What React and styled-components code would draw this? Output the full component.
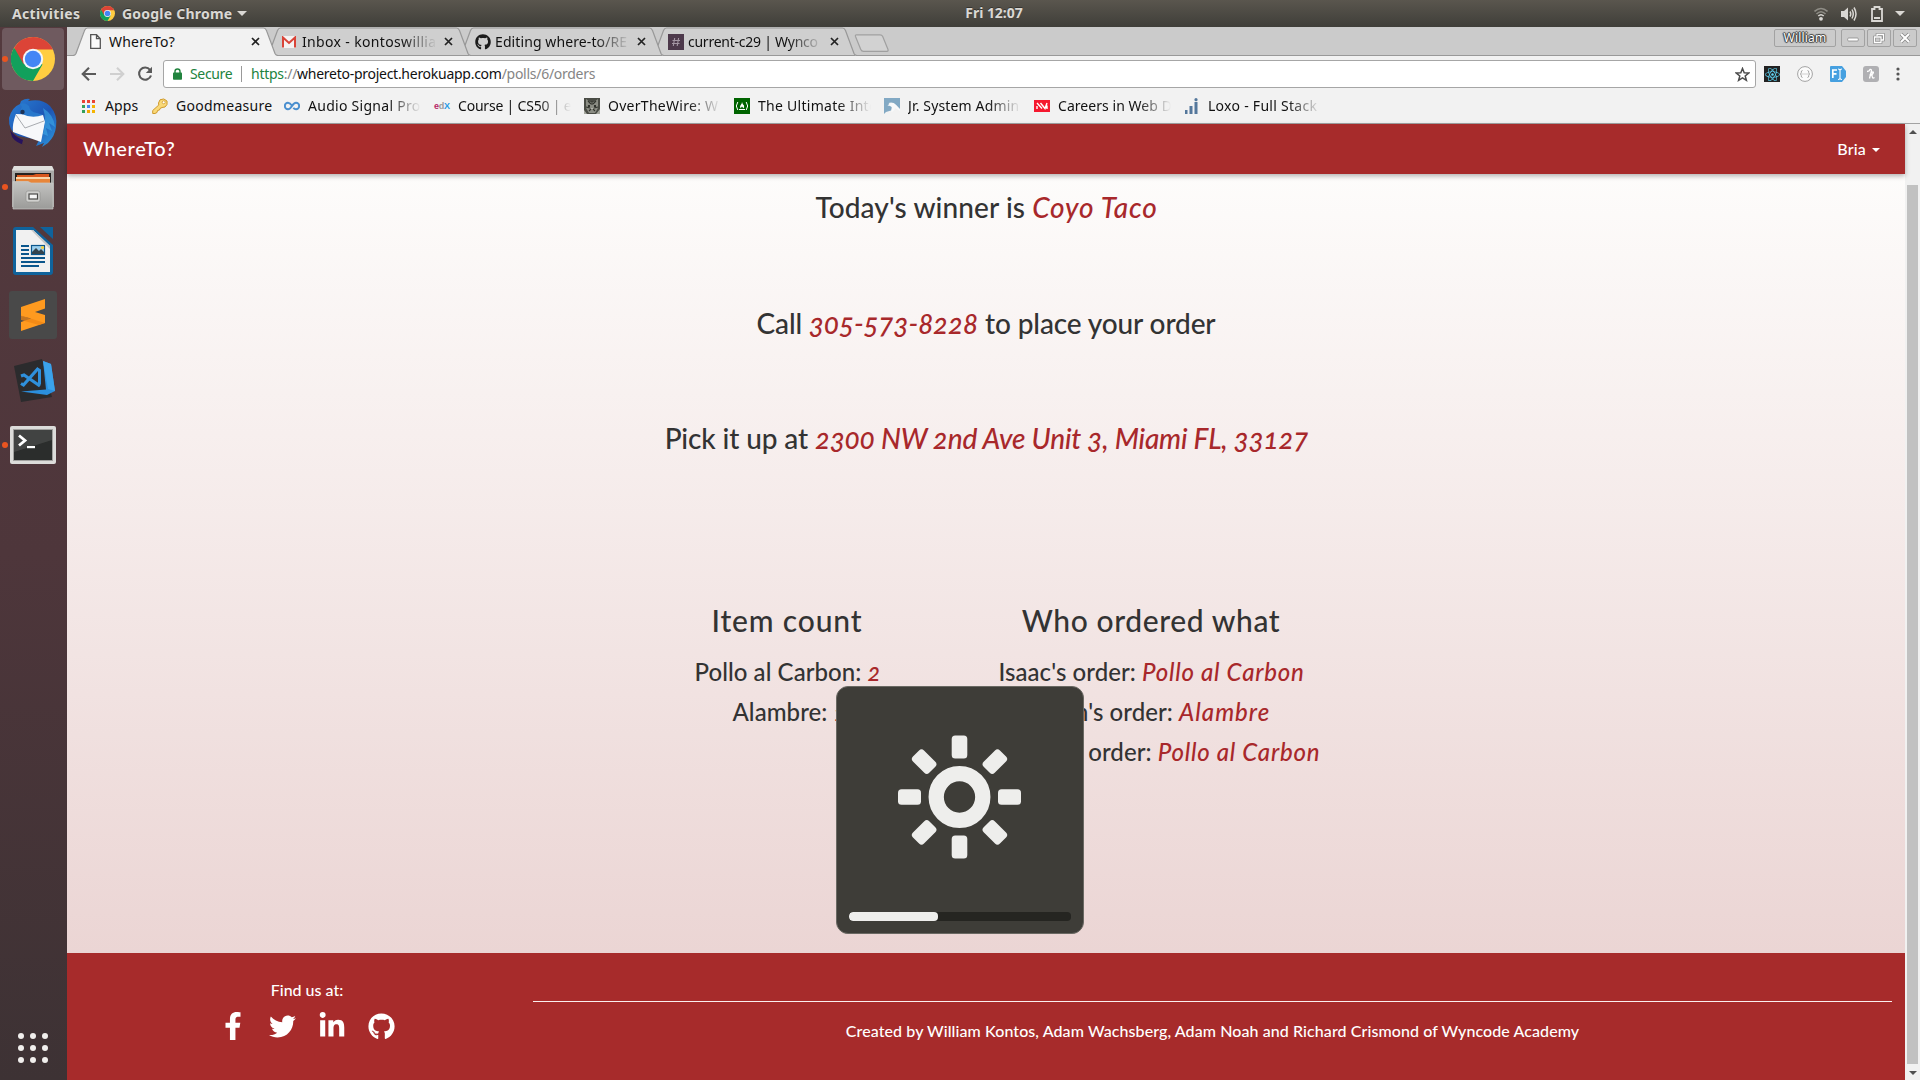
import React from "react";
import styled, { createGlobalStyle, css } from "styled-components";
import { FaFacebookF, FaTwitter, FaLinkedinIn, FaGithub, FaReact } from "react-icons/fa";

const GlobalStyle = createGlobalStyle`
  * { box-sizing: border-box; }
  html, body { margin: 0; padding: 0; overflow: hidden; }
  svg { display: block; flex: none; }
`;

const uiFont = css`font-family: "Noto Sans", "Open Sans", sans-serif;`;
const pageFont = css`
  font-family: Lato, "Open Sans", sans-serif;
  font-variant-numeric: oldstyle-nums;
`;

/* ---------- desktop ---------- */
const Desktop = styled.div`
  width: 1920px;
  height: 1080px;
  display: flex;
  flex-direction: column;
  overflow: hidden;
  position: relative;
  ${uiFont}
`;
const TopBar = styled.header`
  height: 27px;
  flex: none;
  display: grid;
  grid-template-columns: 1fr auto 1fr;
  align-items: center;
  padding: 0 10px 0 12px;
  background: linear-gradient(#5a564e, #3f3e39);
  color: #dad8d4;
  font-size: 14px;
  font-weight: bold;
  line-height: 26px;
  text-shadow: 0 -1px 0 rgba(0, 0, 0, 0.35);
`;
const TopLeft = styled.div`display: flex; align-items: center;`;
const Activities = styled.span`letter-spacing: 0.33px; width: 88px;`;
const AppName = styled.span`letter-spacing: 0.22px; margin: 0 5px 0 7px;`;
const Clock = styled.span`letter-spacing: -0.05px; margin: -1px 0 0 66px;`;
const Tray = styled.div`display: flex; align-items: center; justify-content: flex-end;`;
const TrayItem = styled.span`margin-left: ${(p) => p.$gap || 0}px;`;
const Body = styled.div`flex: 1; display: flex; min-height: 0;`;

/* ---------- dock ---------- */
const Dock = styled.nav`
  width: 67px;
  flex: none;
  display: flex;
  flex-direction: column;
  align-items: flex-start;
  gap: 2px;
  padding: 1px 0 17px 2px;
  background: linear-gradient(#543a3e, #4e363b 50%, #3d3234);
`;
const DockItem = styled.div`
  width: 62px;
  height: 62px;
  flex: none;
  display: grid;
  grid-template-columns: 6px 50px 6px;
  align-items: center;
  justify-items: center;
  border-radius: 4px;
  padding: ${(p) => p.$dy || 0}px 0 0 0;
  background: ${(p) => (p.$active ? "#6f5a5f" : "transparent")};
`;
const Dot = styled.span`
  width: 6px;
  height: 6px;
  border-radius: 50%;
  background: ${(p) => (p.$on ? "#e95420" : "transparent")};
`;
const AppsButton = styled.div`
  margin: auto 0 0 16px;
  display: grid;
  grid-template-columns: repeat(3, 6px);
  gap: 6px;
`;
const AppsDot = styled.span`width: 6px; height: 6px; border-radius: 50%; background: #f1efed;`;

/* ---------- browser ---------- */
const Browser = styled.main`flex: 1; display: flex; flex-direction: column; min-width: 0;`;
const TabStrip = styled.div`
  height: 29px;
  flex: none;
  display: flex;
  justify-content: space-between;
  padding: 0 3px 0 6px;
  background: linear-gradient(#cbcbcb 0 28px, #999 28px);
`;
const Tabs = styled.div`display: flex;`;
const Tab = styled.div`
  width: 205px;
  height: 29px;
  margin-right: -12px;
  display: grid;
  z-index: ${(p) => p.$z};
  & > * { grid-area: 1 / 1; }
`;
const TabInner = styled.div`
  display: flex;
  align-items: center;
  height: 29px;
  padding: 0 16px 0 15px;
`;
const TabIcon = styled.span`width: 18px; display: flex; justify-content: center;`;
const TabLabel = styled.span`
  width: 136px;
  margin: 0 6px 0 3px;
  overflow: hidden;
  white-space: nowrap;
  font-size: 14px;
  line-height: 28px;
  color: #111;
  letter-spacing: ${(p) => p.$ls}px;
  mask-image: ${(p) => (p.$fade ? "linear-gradient(to right, #000 100px, transparent 135px)" : "none")};
`;
const NewTab = styled.div`margin: 7px 0 0 9px;`;
const WindowControls = styled.div`display: flex; padding-top: 2px;`;
const UserTag = styled.div`
  width: 62px;
  height: 18px;
  margin-right: 5px;
  border: 1px solid #a2a2a2;
  border-radius: 2px;
  font-size: 12px;
  line-height: 16px;
  letter-spacing: 0.2px;
  text-align: center;
  color: #fff;
  text-shadow: 0 0 1px #333, 0 0 1px #333, 1px 0 1px #444, -1px 0 1px #444, 0 1px 1px #444, 0 -1px 1px #444;
`;
const WinButton = styled.div`
  width: 24px;
  height: 18px;
  margin-right: 2px;
  border: 1px solid #a2a2a2;
  border-radius: 2px;
  display: grid;
  place-items: center;
  &:last-child { margin-right: 0; }
`;
const Toolbar = styled.div`
  height: 36px;
  flex: none;
  display: flex;
  align-items: center;
  padding: 0 20px 0 13px;
  background: #f2f2f2;
`;
const NavIcons = styled.div`display: flex; gap: 10px; width: 83px;`;
const Omnibox = styled.div`
  width: 1593px;
  height: 28px;
  display: flex;
  align-items: center;
  padding: 0 5px 0 9px;
  border: 1px solid #a6a6a6;
  border-radius: 3px;
  background: #fff;
  font-size: 14px;
  line-height: 26px;
`;
const Secure = styled.span`color: #21833e; letter-spacing: -0.35px; margin-left: 8px; width: 51px;`;
const Divider = styled.span`width: 1px; height: 16px; background: #999; margin-right: 9px;`;
const Url = styled.span`flex: 1; letter-spacing: -0.27px; color: #111;`;
const Scheme = styled.span`color: #21833e;`;
const Muted = styled.span`color: #858585;`;
const Extensions = styled.div`display: flex; flex: 1; justify-content: space-between; padding-left: 8px; align-items: center;`;
const ReactBadge = styled.span`
  width: 16px; height: 16px; background: #222; color: #5fd3f3;
  display: grid; place-items: center; font-size: 15px;
`;
const Bookmarks = styled.div`
  height: 32px;
  flex: none;
  display: flex;
  align-items: flex-start;
  padding: 0 15px;
  background: #f2f2f2;
  border-bottom: 1px solid #a3a3a3;
`;
const Bookmark = styled.div`
  width: ${(p) => p.$w || 150}px;
  height: 28px;
  display: flex;
  align-items: center;
  gap: ${(p) => p.$gap || 8}px;
`;
const BookmarkLabel = styled.span`
  width: 116px;
  white-space: nowrap;
  font-size: 14px;
  line-height: 28px;
  letter-spacing: ${(p) => p.$ls ?? 0.28}px;
  color: #111;
  mask-image: ${(p) => (p.$fade ? "linear-gradient(to right, #000 80px, transparent 113px)" : "none")};
`;
const EdxLogo = styled.span`
  width: 16px;
  font: bold 9px/16px "Liberation Sans", sans-serif;
  letter-spacing: -0.3px;
  color: #b72667;
  white-space: nowrap;
`;
const EdxD = styled.span`color: #9a9a9a;`;
const EdxX = styled.span`color: #1e9be5;`;

/* ---------- web page ---------- */
const Viewport = styled.div`flex: 1; display: flex; min-height: 0;`;
const Page = styled.div`
  flex: 1;
  display: flex;
  flex-direction: column;
  ${pageFont}
  font-weight: 500;
  color: #333;
`;
const Navbar = styled.div`
  height: 50px;
  flex: none;
  display: flex;
  align-items: center;
  justify-content: space-between;
  padding: 0 25px 3px 16px;
  background: #a72b2b;
  color: #fff;
  z-index: 1;
  box-shadow: 0 2px 5px rgba(0, 0, 0, 0.3);
`;
const Brand = styled.span`font-size: 20px; letter-spacing: 0.7px;`;
const UserMenu = styled.span`
  display: flex; align-items: center; gap: 6px; font-size: 16px; letter-spacing: 0.2px; padding-top: 1px;
`;
const Caret = styled.i`margin-top: 3px; border: 4px solid transparent; border-top-color: #fff; border-bottom: 0;`;
const Content = styled.section`
  flex: 1;
  padding: 13px 0 0 0;
  background: linear-gradient(#fdfcfb, #ebd5d4);
`;
const Line = styled.p`
  margin: 0 0 75.5px;
  height: 40px;
  line-height: 40px;
  font-size: 28px;
  text-align: center;
  white-space: pre;
  letter-spacing: ${(p) => p.$ls || 0}px;
  padding-left: ${(p) => p.$shift || 0}px;
`;
const Em = styled.em`color: #a8282b; letter-spacing: ${(p) => p.$ls || 0}px;`;
const Columns = styled.div`
  display: flex;
  justify-content: center;
  padding: 65px 35px 0 0;
`;
const Column = styled.div`width: 364px; text-align: center; white-space: pre;`;
const ColumnTitle = styled.h2`
  margin: 0 0 11px;
  font-size: 30px;
  font-weight: 500;
  line-height: 42px;
  letter-spacing: ${(p) => p.$ls}px;
  padding-left: 1px;
`;
const Entry = styled.p`
  margin: 0 ${(p) => -(p.$shift || 0)}px 0 ${(p) => p.$shift || 0}px;
  height: 40px;
  line-height: 40px;
  font-size: 24px;
  letter-spacing: 0.06px;
`;
const Footer = styled.footer`
  height: 127px;
  flex: none;
  display: flex;
  background: #a72b2b;
  color: #fff;
  font-size: 16px;
`;
const Social = styled.div`
  width: 466px;
  padding: 25px 0 0 13px;
  display: flex;
  flex-direction: column;
  align-items: center;
`;
const SocialTitle = styled.span`line-height: 24px; margin-left: 1px;`;
const SocialIcons = styled.div`display: flex; align-items: center; height: 32px; margin-top: 8px; gap: 22px;`;
const Credit = styled.div`flex: 1; padding: 48px 13px 0 0; text-align: center;`;
const Rule = styled.hr`margin: 0 0 17px; border: 0; height: 1px; background: #fbeeee;`;
const CreditText = styled.p`margin: 0; line-height: 24px; letter-spacing: 0.085px;`;
const Scrollbar = styled.div`
  width: 15px;
  flex: none;
  display: flex;
  flex-direction: column;
  align-items: center;
  background: #f1f1f1;
  padding: 6px 0 5px;
`;
const Thumb = styled.div`flex: 1; width: 11px; margin: 51px 0 7px; background: #c1c1c1;`;
const Arrow = styled.i`
  border: 4px solid transparent;
  ${(p) => (p.$up ? "border-bottom-color: #505050; border-top: 0;" : "border-top-color: #505050; border-bottom: 0;")}
`;

/* ---------- brightness popup ---------- */
const Osd = styled.div`
  position: absolute;
  left: 836px;
  top: 686px;
  width: 248px;
  height: 248px;
  display: flex;
  flex-direction: column;
  justify-content: space-between;
  align-items: center;
  padding: 48px 12px 12px;
  border: 1px solid #6a6963;
  border-radius: 12px;
  background: #3e3d38;
  z-index: 5;
`;
const Level = styled.div`width: 222px; height: 9px; border-radius: 4px; background: #252521; overflow: hidden;`;
const LevelFill = styled.div`width: 40%; height: 9px; border-radius: 4px; background: #eeeeec;`;

/* ---------- drawings ---------- */
const ChromeLogo = ({ size }) => (
  <svg width={size} height={size} viewBox="0 0 44 44">
    <circle cx="22" cy="22" r="22" fill="#ffcd41" />
    <path d="M22 22 L2.9 11 A22 22 0 0 0 22 44 L31.5 27.5 Z" fill="#12a05c" />
    <path d="M22 0 A22 22 0 0 1 41.8 12.4 L22 12.4 L12.5 27 L3.2 10.8 A22 22 0 0 1 22 0 Z" fill="#dc4437" />
    <circle cx="22" cy="22" r="10.2" fill="#f4f6f8" />
    <circle cx="22" cy="22" r="8.2" fill="#4486f5" />
  </svg>
);
const Thunderbird = () => (
  <svg width="50" height="50" viewBox="0 0 50 50">
    <defs>
      <linearGradient id="tb" x1="0" y1="0" x2="1" y2="1">
        <stop offset="0" stopColor="#2a7fd4" /><stop offset=".55" stopColor="#1d55b4" /><stop offset="1" stopColor="#2e9be0" />
      </linearGradient>
    </defs>
    <path d="M13 3 Q18 0 22 1 L20 3 Q34 0 42 8 Q50 17 48 29 Q47 38 40 45 L34 49 L36 45 L28 48 L31 42 L10 38 Q0 32 1 20 Q4 9 12 6 Z" fill="url(#tb)" />
    <path d="M2 32 Q7 39 15 42 L14 46 L17 47 Q8 45 4 39 Z" fill="#27125d" />
    <path d="M8 16 L35 17 L37 24 L33 44 L5 34 Q4 26 8 16 Z" fill="#f7f8fa" />
    <path d="M8 17 L17 30 L36 23" fill="none" stroke="#a8abb0" strokeWidth="1" />
    <path d="M12 6 Q17 4 21 8 Q22 14 29 15 L35 17 Q24 21 14 16 Q11 12 14 9 Z" fill="#2878cc" />
    <circle cx="14.5" cy="14" r="2.2" fill="#1c3358" />
    <path d="M35 10 Q46 17 47 29 L41 25 L44 33 L38 30 L40 38 L35 36 Q39 22 35 10 Z" fill="#3da9e6" opacity=".6" />
  </svg>
);
const FilesIcon = () => (
  <svg width="44" height="46" viewBox="0 0 44 46">
    <defs>
      <linearGradient id="cab" x1="0" y1="0" x2="0" y2="1"><stop offset="0" stopColor="#c4c4c2" /><stop offset="1" stopColor="#9b9b99" /></linearGradient>
    </defs>
    <path d="M3 2 H41 L43 6 V43 H1 V6 Z" fill="#a9a9a7" />
    <path d="M3 2 H41 L43 6.5 H1 Z" fill="#e0e0de" />
    <rect x="4" y="9" width="36" height="10" fill="#262220" />
    <path d="M6 11 H22 L25 10 H38 V19 H6 Z" fill="#d8571d" />
    <rect x="5" y="13" width="34" height="2" fill="#f9d5a8" />
    <rect x="5" y="15" width="34" height="4" fill="#e8863a" />
    <path d="M2 17.500 H17 L20 19 H42 V45 H2 Z" fill="url(#cab)" stroke="#c9c9c7" strokeWidth=".7" />
    <rect x="15" y="27" width="14" height="11" rx="2" fill="#d0d0ce" stroke="#8d8d8b" strokeWidth=".6" />
    <rect x="18" y="30" width="8.500" height="5" fill="#f6f6f6" stroke="#4a4a48" strokeWidth="1.200" />
  </svg>
);
const WriterIcon = () => (
  <svg width="40" height="48" viewBox="0 0 40 48">
    <path d="M3 0 H20 L40 18 V45 Q40 48 37 48 H3 Q0 48 0 45 V3 Q0 0 3 0 Z" fill="#0f639c" />
    <path d="M27 0 H40 V12 Z" fill="#0f639c" />
    <path d="M3 3 H20 L37 19 V45 H3 Z" fill="#f1f1f1" />
    <path d="M20 3 L37 19 V22 L18 3 Z" fill="#c6c6c6" />
    <path d="M8 19 H16 M8 23 H16 M8 27 H16 M8 31 H32 M8 35 H32 M8 39 H26" stroke="#0a568c" strokeWidth="2" />
    <rect x="18.500" y="18.500" width="13" height="9" fill="#9bd0ee" stroke="#0a568c" strokeWidth="1.200" />
    <path d="M19 27 V25 L23 21 L26 24 L28 22 L31 25 V27 Z" fill="#33434d" />
    <circle cx="29.500" cy="20.500" r="1.600" fill="#f4cf3c" />
  </svg>
);
const SublimeIcon = () => (
  <svg width="48" height="48" viewBox="0 0 48 48">
    <rect width="48" height="48" rx="3" fill="#494949" />
    <path d="M12 16 L36 8 V17.500 L26 21 L36 24 V32 L12 40 V31 L22 27.500 L12 25 Z" fill="#ff9a1f" />
    <path d="M12 24.500 L36 32 L30 34 L12 29 Z" fill="#ee8414" opacity=".75" />
  </svg>
);
const VscodeIcon = () => (
  <svg width="46" height="44" viewBox="-4 0 46 44">
    <path d="M0 7 L28 0 L38 38 L7 43 Z" fill="#2b2b2d" />
    <path d="M29 2 L37 5 L41 32 L33 36 L7 32.500 L32 30.500 Z" fill="#2b8fdd" />
    <path d="M29 2 L37 5 L41 32 L34 30 Z" fill="#3ba2ea" />
    <path d="M7 17 L10 16 L26 27 M7 24.500 L9.500 26 L24.500 9" fill="none" stroke="#2f90dc" strokeWidth="3.200" />
    <path d="M24 9 L27 10.500 V25 L24 27.500 Z" fill="#2f90dc" />
  </svg>
);
const TerminalIcon = () => (
  <svg width="46" height="38" viewBox="0 0 46 38">
    <rect width="46" height="38" rx="2" fill="#dcdcda" />
    <rect x="3" y="3" width="40" height="32" fill="#a2a2a0" />
    <rect x="4" y="4" width="38" height="30" fill="#2b2d2c" />
    <path d="M4 4 H42 V14 L4 26 Z" fill="#4b4d4c" opacity=".7" />
    <path d="M9 9.500 L15 14.500 L9 19.500" fill="none" stroke="#fff" strokeWidth="2.800" />
    <rect x="17" y="20" width="8" height="2.200" fill="#fff" />
  </svg>
);
const WifiIcon = () => (
  <svg width="14" height="14" viewBox="0 0 14 14" fill="none" strokeWidth="1.600">
    <path d="M0.500 4.500 Q7 -1.500 13.500 4.500 M2.500 7 Q7 2.500 11.500 7" stroke="#8f8d86" />
    <path d="M4.300 9 Q7 6.500 9.700 9" stroke="#dad8d4" /><circle cx="7" cy="11.800" r="1.900" fill="#dad8d4" />
  </svg>
);
const VolumeIcon = () => (
  <svg width="16" height="16" viewBox="0 0 16 16">
    <path d="M0 5 H3 L7 1.500 V14.500 L3 11 H0 Z" fill="#dad8d4" />
    <path d="M9 5.500 Q10.500 8 9 10.500 M11 3.500 Q13.500 8 11 12.500 M13 1.500 Q17 8 13 14.500" fill="none" stroke="#dad8d4" strokeWidth="1.500" />
  </svg>
);
const BatteryIcon = () => (
  <svg width="12" height="16" viewBox="0 0 12 16">
    <path d="M1 3 H3.500 V1 H8.500 V3 H11 V15 H1 Z" fill="none" stroke="#dad8d4" strokeWidth="1.800" />
    <rect x="3" y="11" width="6" height="2" fill="#dad8d4" />
  </svg>
);
const Triangle = ({ w = 10, color = "#dad8d4" }) => (
  <svg width={w} height="5" viewBox="0 0 10 5"><path d="M0 0 H10 L5 5 Z" fill={color} /></svg>
);
const TabShape = ({ active }) => (
  <svg width="205" height="29" viewBox="0 0 205 29">
    <path d="M0 29 L0.500 28.500 Q2 28.500 3 26.500 L11 3.500 Q12.500 1 14 1 H191 Q193 1 194 3.500 L202 26.500 Q203 28.500 205 28.500 V29 Z" fill={active ? "#f2f2f2" : "#cfcfcf"} />
    <path d="M0 28.500 Q2 28.500 3 26.500 L11.500 3.500 Q12.500 1 14.500 1 H190.500 Q192.500 1 193.500 3.500 L202 26.500 Q203 28.500 205 28.500" fill="none" stroke="#989898" strokeWidth="1.200" />
    {!active && <path d="M2 28.500 H203" stroke="#999" strokeWidth="1" />}
  </svg>
);
const CloseX = () => (
  <svg width="9" height="9" viewBox="0 0 9 9"><path d="M1 1 L8 8 M8 1 L1 8" stroke="#222" strokeWidth="1.700" /></svg>
);
const DocIcon = () => (
  <svg width="14" height="15" viewBox="0 0 14 15"><path d="M.7 .7 H6.500 L10.300 4.700 V14.300 H.7 Z M6.500 .7 V4.700 H10.300" fill="#fbfbfb" stroke="#555" strokeWidth="1.300" /></svg>
);
const GmailIcon = () => (
  <svg width="18" height="12" viewBox="0 0 18 12"><rect x="1" width="14" height="12" rx="1" fill="#f5f2f2" /><path d="M2 11.500 V1.500 L8 7 L14 1.500 V11.500" fill="none" stroke="#d94438" strokeWidth="2" /></svg>
);
const SlackHash = () => (
  <svg width="16" height="16" viewBox="0 0 16 16"><rect width="16" height="16" fill="#4d394b" /><path d="M6.700 4 L5.300 12 M10.600 4 L9.200 12 M4.500 6.500 H12 M4 9.500 H11.500" stroke="#a496a3" strokeWidth="1.100" /></svg>
);
const BackIcon = ({ color, flip }) => (
  <svg width="18" height="16" viewBox="0 0 18 16"><path transform={flip ? "matrix(-1 0 0 1 18 0)" : undefined} d="M16 8 H3 M9 1.700 L2.700 8 L9 14.300" fill="none" stroke={color} strokeWidth="2.100" /></svg>
);
const ReloadIcon = () => (
  <svg width="17" height="16" viewBox="-1 0 17 16"><path d="M13 3.800 A6.100 6.100 0 1 0 14 9.500" fill="none" stroke="#5a5a5a" strokeWidth="2.100" /><path d="M15 .8 V7 H8.800 Z" fill="#5a5a5a" /></svg>
);
const LockIcon = () => (
  <svg width="9" height="12" viewBox="0 0 9 12"><rect y="4.500" width="9" height="7.300" rx=".8" fill="#21833e" /><path d="M2 5 V3.200 Q2 1 4.500 1 T7 3.200 V5" fill="none" stroke="#21833e" strokeWidth="1.400" /></svg>
);
const StarIcon = () => (
  <svg width="15" height="15" viewBox="0 0 15 15"><path d="M7.500 1.500 L9.200 5.700 L13.700 6 L10.200 8.900 L11.400 13.300 L7.500 10.900 L3.600 13.300 L4.800 8.900 L1.300 6 L5.800 5.700 Z" fill="none" stroke="#4b4b4b" strokeWidth="1.500" /></svg>
);
const BracesIcon = () => (
  <svg width="16" height="16" viewBox="0 0 16 16" fill="none" stroke="#a3a3a3"><circle cx="8" cy="8" r="7.400" fill="#fbfbfb" /><path d="M5.500 4.500 Q4 4.500 4.300 6.500 Q4.300 8 3.300 8 Q4.300 8 4.300 9.500 Q4 11.500 5.500 11.500 M10.500 4.500 Q12 4.500 11.700 6.500 Q11.700 8 12.700 8 Q11.700 8 11.700 9.500 Q12 11.500 10.500 11.500" /><path d="M5.500 8 H10.500" strokeDasharray="1 1" /></svg>
);
const FontIcon = () => (
  <svg width="16" height="16" viewBox="0 0 16 16"><path d="M1 0 H12 L16 5 V11 L12 16 H1 Q0 16 0 15 V1 Q0 0 1 0 Z" fill="#46a0e0" /><path d="M2.800 12 V4 H7 M2.800 7.800 H6.500" fill="none" stroke="#fff" strokeWidth="1.700" /><path d="M8 3 Q10 3 10 4.500 Q10 3 12 3 M10 4 V12.500 M8 13.500 Q10 13.500 10 12 Q10 13.500 12 13.500" fill="none" stroke="#fff" strokeWidth="1.100" /></svg>
);
const HoneyIcon = () => (
  <svg width="16" height="16" viewBox="0 0 16 16"><rect width="16" height="16" rx="3" fill="#b0b0b3" /><path d="M4 5.500 Q6.500 5.500 7 3.500 Q9 3 8.300 5.500 L6.500 12.500 M6.900 9.500 Q7.500 7 9.500 6 Q11 5.700 10 7.500 Q9 8.800 8 8.800 Q9.500 9 9.300 11 Q9.500 12.800 11.500 11.500" fill="none" stroke="#fff" strokeWidth="1.300" /></svg>
);
const DotsIcon = () => (
  <svg width="4" height="14" viewBox="0 0 4 14" fill="#555"><circle cx="2" cy="2" r="1.600" /><circle cx="2" cy="7" r="1.600" /><circle cx="2" cy="12" r="1.600" /></svg>
);
const AppsIcon = () => (
  <svg width="13" height="13" viewBox="0 0 13 13">
    {["#ea4335", "#ea4335", "#ea4335", "#34a05a", "#4285f4", "#f4b400", "#34a05a", "#f4a500", "#f4b400"].map((c, i) => (
      <rect key={i} x={(i % 3) * 5} y={Math.floor(i / 3) * 5} width="3" height="3" fill={c} />
    ))}
  </svg>
);
const KeyIcon = () => (
  <svg width="16" height="16" viewBox="0 0 16 16"><path d="M6.500 5 L8 1.800 Q12 -.5 15 3 Q16 7 13 9 L10 9.500 L8 10.500 L7.500 12 L5.500 12.500 L5 14.500 L3 15.500 H.7 V12.500 L6.800 7 Z" fill="#f9d978" stroke="#cf9a2c" /><circle cx="11.700" cy="4.300" r="1.500" fill="#fff" stroke="#cf9a2c" strokeWidth=".8" /></svg>
);
const InfinityIcon = () => (
  <svg width="16" height="16" viewBox="0 0 16 16"><path d="M8.300 8 Q6 4.800 4 4.800 A3.200 3.200 0 0 0 4 11.200 Q6 11.200 8 8 Q10 4.800 12 4.800 A3.200 3.200 0 0 1 12 11.200 Q10.500 11.200 9.300 9.800" fill="none" stroke="#4a8fcf" strokeWidth="2" /></svg>
);
const CatIcon = () => (
  <svg width="16" height="16" viewBox="0 0 16 16"><rect width="16" height="16" fill="#4a4c45" /><path d="M2 1 L6 4 H10 L14 1 V10 L11 15 H5 L2 10 Z" fill="#8b8d84" /><path d="M4 3 L7 6 M8 3 V7 M12 3 L9 6 M2 9 L6 10 M14 9 L10 10 M5 13 L7 11 M11 13 L9 11" stroke="#33352f" strokeWidth="1.100" /><circle cx="5" cy="8" r="1.100" fill="#1c1e1a" /><circle cx="11" cy="8" r="1.100" fill="#1c1e1a" /><path d="M7 10 H9 L8 11.500 Z" fill="#c9cac3" /><path d="M0 12 L3 16 H0 Z M16 11 L12 16 H16 Z" fill="#a5a79e" /></svg>
);
const CampIcon = () => (
  <svg width="16" height="16" viewBox="0 0 16 16"><rect width="16" height="16" fill="#006400" /><path d="M3.800 4 Q.8 8 3.800 12 M12.200 4 Q15.200 8 12.200 12 M5 11.500 H11" fill="none" stroke="#fff" strokeWidth="1" /><path d="M8 4 Q8.500 6 10 7.500 Q10.800 9.500 9 10.500 Q9 9 8 8.500 Q7 9 7 10.500 Q5.200 9 6.500 7.200 Q8 6 8 4 Z" fill="#fff" /></svg>
);
const JrIcon = () => (
  <svg width="16" height="16" viewBox="0 0 16 16"><path d="M0 0 H16 V11 L12 7 Q9 3.500 4.500 5 L8 8.500 L7 12.500 L2 14 L0 16 Z" fill="#82a9c4" /><path d="M3.500 7.500 Q8 3 12 7 L16 11.500 V13 L11 10 Q10.500 13 7 14 Q9.500 10 7 8.500 Q5.500 7.500 3.500 7.500 Z" fill="#f8fafb" /></svg>
);
const CareersIcon = () => (
  <svg width="16" height="12" viewBox="0 0 16 12"><rect width="16" height="12" fill="#f5182f" /><path d="M3 3 L8 8.500 M6.500 3 L11 8.500 L13 3 M3 6 V9 M13 5.500 V9" fill="none" stroke="#fff" strokeWidth="1.400" /></svg>
);
const LoxoIcon = () => (
  <svg width="16" height="16" viewBox="0 0 16 16" fill="#54779b"><rect x="1" y="12" width="2.500" height="4" /><rect x="5.500" y="8" width="3" height="8" /><rect x="10.500" y="4" width="3" height="12" /><circle cx="12" cy="1.700" r="1.600" /></svg>
);
const SunIcon = () => (
  <svg width="124" height="124" viewBox="-61.500 -62 124 124">
    <circle r="23.300" fill="none" stroke="#eeeeec" strokeWidth="15.300" />
    {[0, 45, 90, 135, 180, 225, 270, 315].map((a) => (
      <rect key={a} x="-7.800" y="-61.500" width="15.600" height="23" rx="3.500" fill="#eeeeec" transform={`rotate(${a})`} />
    ))}
  </svg>
);

/* ---------- data ---------- */
const dockApps = [
  { icon: <ChromeLogo size={44} />, on: true, active: true },
  { icon: <Thunderbird /> },
  { icon: <FilesIcon />, on: true },
  { icon: <WriterIcon /> },
  { icon: <SublimeIcon /> },
  { icon: <VscodeIcon />, dy: 3 },
  { icon: <TerminalIcon />, on: true, dy: 3 },
];
const tabs = [
  { label: "WhereTo?", icon: <DocIcon />, active: true, ls: 0.2 },
  { label: "Inbox - kontoswillia", icon: <GmailIcon />, fade: true, ls: 0.35 },
  { label: "Editing where-to/RE", icon: <FaGithub size={16} color="#1b1b1b" />, fade: true, ls: 0.1 },
  { label: "current-c29 | Wynco", icon: <SlackHash />, fade: true, ls: -0.25 },
];
const bookmarks = [
  { label: "Goodmeasure", icon: <KeyIcon />, w: 132 },
  { label: "Audio Signal Pro", icon: <InfinityIcon />, fade: true },
  { label: "Course | CS50 | ec", icon: <EdxLogo>e<EdxD>d</EdxD><EdxX>X</EdxX></EdxLogo>, fade: true, ls: -0.2 },
  { label: "OverTheWire: W", icon: <CatIcon />, fade: true },
  { label: "The Ultimate Inte", icon: <CampIcon />, fade: true },
  { label: "Jr. System Admin", icon: <JrIcon />, fade: true, ls: 0.15 },
  { label: "Careers in Web D", icon: <CareersIcon />, fade: true, ls: 0.05 },
  { label: "Loxo - Full Stack", icon: <LoxoIcon />, fade: true },
];

export default function App() {
  return (
    <Desktop>
      <GlobalStyle />
      <TopBar>
        <TopLeft>
          <Activities>Activities</Activities>
          <ChromeLogo size={15} />
          <AppName>Google Chrome</AppName>
          <Triangle />
        </TopLeft>
        <Clock>Fri 12:07</Clock>
        <Tray>
          <TrayItem><WifiIcon /></TrayItem>
          <TrayItem $gap={13}><VolumeIcon /></TrayItem>
          <TrayItem $gap={14}><BatteryIcon /></TrayItem>
          <TrayItem $gap={12}><Triangle /></TrayItem>
          <TrayItem $gap={5} />
        </Tray>
      </TopBar>
      <Body>
        <Dock>
          {dockApps.map((a, i) => (
            <DockItem key={i} $active={a.active} $dy={a.dy}><Dot $on={a.on} />{a.icon}</DockItem>
          ))}
          <AppsButton>{Array.from({ length: 9 }, (_, i) => <AppsDot key={i} />)}</AppsButton>
        </Dock>
        <Browser>
          <TabStrip>
            <Tabs>
              {tabs.map((t, i) => (
                <Tab key={t.label} $z={5 - i}>
                  <TabShape active={t.active} />
                  <TabInner>
                    <TabIcon>{t.icon}</TabIcon>
                    <TabLabel $fade={t.fade} $ls={t.ls}>{t.label}</TabLabel>
                    <CloseX />
                  </TabInner>
                </Tab>
              ))}
              <NewTab>
                <svg width="36" height="19" viewBox="0 0 36 19"><path d="M2.500 .8 H26 Q28 .8 28.700 2.500 L34 15.500 Q34.500 17.300 33 17.300 H9.500 Q7.500 17.300 6.800 15.500 L1.500 2.500 Q1 .8 2.500 .8 Z" fill="#d2d2d2" stroke="#a0a0a0" strokeWidth="1.200" /></svg>
              </NewTab>
            </Tabs>
            <WindowControls>
              <UserTag>William</UserTag>
              <WinButton><svg width="12" height="10" viewBox="0 0 12 10"><rect x=".7" y="5" width="10.600" height="3" rx="1" fill="#fff" stroke="#8a8a8a" strokeWidth=".8" /></svg></WinButton>
              <WinButton><svg width="12" height="11" viewBox="0 0 12 11" fill="none"><path d="M4 3 V1.500 H10.500 V7 H8.500 M1.500 4 H8 V9.500 H1.500 Z" stroke="#858585" strokeWidth="2.600" /><path d="M4 3 V1.500 H10.500 V7 H8.500 M1.500 4 H8 V9.500 H1.500 Z" stroke="#fff" strokeWidth="1.300" /></svg></WinButton>
              <WinButton><svg width="12" height="12" viewBox="0 0 12 12"><path d="M2 2 L10 10 M10 2 L2 10" stroke="#858585" strokeWidth="3.400" /><path d="M2 2 L10 10 M10 2 L2 10" stroke="#fff" strokeWidth="2" /></svg></WinButton>
            </WindowControls>
          </TabStrip>
          <Toolbar>
            <NavIcons>
              <BackIcon color="#5a5a5a" />
              <BackIcon color="#d0d0d0" flip />
              <ReloadIcon />
            </NavIcons>
            <Omnibox>
              <LockIcon />
              <Secure>Secure</Secure>
              <Divider />
              <Url><Scheme>https</Scheme><Muted>://</Muted>whereto-project.herokuapp.com<Muted>/polls/6/orders</Muted></Url>
              <StarIcon />
            </Omnibox>
            <Extensions>
              <ReactBadge><FaReact /></ReactBadge>
              <BracesIcon />
              <FontIcon />
              <HoneyIcon />
              <DotsIcon />
            </Extensions>
          </Toolbar>
          <Bookmarks>
            <Bookmark $w={70} $gap={10}><AppsIcon /><BookmarkLabel $ls={0.1}>Apps</BookmarkLabel></Bookmark>
            {bookmarks.map((b) => (
              <Bookmark key={b.label} $w={b.w}>{b.icon}<BookmarkLabel $fade={b.fade} $ls={b.ls}>{b.label}</BookmarkLabel></Bookmark>
            ))}
          </Bookmarks>
          <Viewport>
            <Page>
              <Navbar>
                <Brand>WhereTo?</Brand>
                <UserMenu>Bria <Caret /></UserMenu>
              </Navbar>
              <Content>
                <Line $ls={0.1} $shift={1}>Today's winner is <Em $ls={0.8}>Coyo Taco</Em></Line>
                <Line $ls={-0.12}>Call <Em $ls={-0.15}>305-573-8228</Em> to place your order</Line>
                <Line $ls={-0.12} $shift={1}>Pick it up at <Em $ls={-0.2}>2300 NW 2nd Ave Unit 3, Miami FL, 33127</Em></Line>
                <Columns>
                  <Column>
                    <ColumnTitle $ls={0.85}>Item count</ColumnTitle>
                    <Entry $shift={1}>Pollo al Carbon: <Em>2</Em></Entry>
                    <Entry $shift={3}>Alambre: <Em>1</Em></Entry>
                  </Column>
                  <Column>
                    <ColumnTitle $ls={0.6}>Who ordered what</ColumnTitle>
                    <Entry $shift={1}>Isaac's order: <Em $ls={0.75}>Pollo al Carbon</Em></Entry>
                    <Entry $shift={-2}>Adam's order: <Em $ls={1}>Alambre</Em></Entry>
                    <Entry $shift={3}>William's order: <Em $ls={0.75}>Pollo al Carbon</Em></Entry>
                  </Column>
                </Columns>
              </Content>
              <Footer>
                <Social>
                  <SocialTitle>Find us at:</SocialTitle>
                  <SocialIcons>
                    <FaFacebookF size={28} />
                    <FaTwitter size={27} />
                    <FaLinkedinIn size={28} />
                    <FaGithub size={27} />
                  </SocialIcons>
                </Social>
                <Credit>
                  <Rule />
                  <CreditText>Created by William Kontos, Adam Wachsberg, Adam Noah and Richard Crismond of Wyncode Academy</CreditText>
                </Credit>
              </Footer>
            </Page>
            <Scrollbar><Arrow $up /><Thumb /><Arrow /></Scrollbar>
          </Viewport>
        </Browser>
      </Body>
      <Osd>
        <SunIcon />
        <Level><LevelFill /></Level>
      </Osd>
    </Desktop>
  );
}
